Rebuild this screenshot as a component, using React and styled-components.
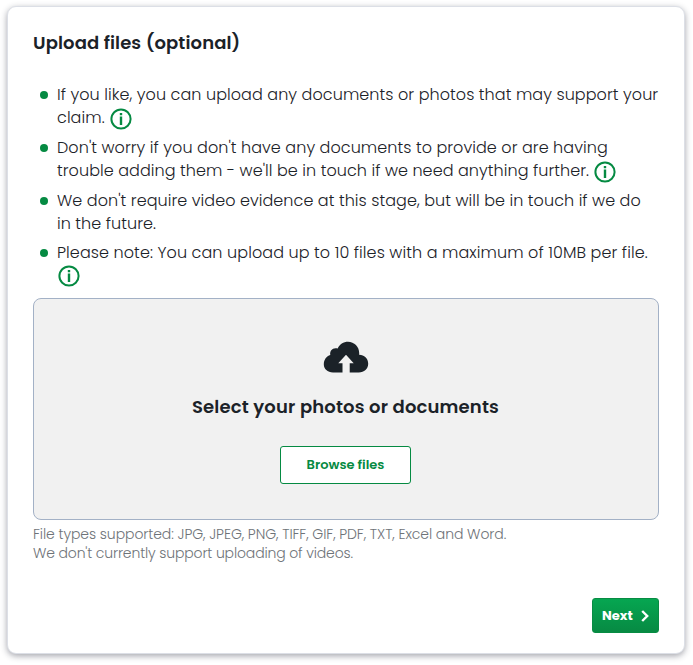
import React from "react";
import styled, { createGlobalStyle } from "styled-components";

const GlobalStyle = createGlobalStyle`
  * { box-sizing: border-box; }
  body {
    margin: 0;
    background: #fff;
    color: #1b2228;
    font-family: Poppins, Inter, sans-serif;
  }
`;

const Page = styled.main`
  height: 665px;
  padding: 6px 8px 11px 7px;
`;

const Card = styled.section`
  display: flex;
  flex-direction: column;
  height: 648px;
  padding: 24px 26px 20px;
  border: 1px solid #dcdfe6;
  border-radius: 9px;
  background: #fff;
  box-shadow: 0 2px 6px rgba(40, 42, 60, 0.42);
`;

const Line = styled.span`
  display: flex;
  align-items: center;
  height: ${(p) => p.$height || 23}px;
  white-space: nowrap;
  letter-spacing: ${(p) => p.$spacing || 0}px;
`;

const Title = styled.h1`
  margin: 0 0 29px -1px;
  font-size: 18px;
  font-weight: 600;
`;

const List = styled.ul`
  display: flex;
  flex-direction: column;
  gap: 6.6px;
  height: 215px;
  margin: 0;
  padding: 0 0 0 6px;
  list-style: none;
  font-size: 16px;
  font-weight: 300;
`;

const Item = styled.li`
  display: flex;
  gap: 9px;

  &:nth-child(3) {
    margin-top: 1px;
  }

  &:last-child {
    margin-top: -1px;
  }
`;

const Bullet = styled.span`
  flex: none;
  width: 8px;
  height: 8px;
  margin-top: 8px;
  border-radius: 50%;
  background: #058a42;
`;

const InfoSvg = styled.svg`
  flex: none;
  width: 22px;
  height: 22px;
  margin: ${(p) => p.$drop}px 0 0 ${(p) => p.$gap}px;
`;

const DropZone = styled.div`
  display: flex;
  flex-direction: column;
  align-items: center;
  height: 222px;
  margin: 0 -1px 0 -1px;
  padding-top: 42px;
  border: 1px solid #a3b1c6;
  border-radius: 8px;
  background: #f1f1f1;
`;

const CloudSvg = styled.svg`
  width: 46px;
  height: 33px;
`;

const ZoneTitle = styled.h2`
  margin: 21px 1px 28px 0;
  font-size: 18px;
  font-weight: 600;
`;

const BrowseButton = styled.button`
  display: flex;
  align-items: center;
  justify-content: center;
  width: 131px;
  height: 38px;
  margin-right: 1px;
  padding: 0 0 1px;
  border: 1px solid #058a42;
  border-radius: 3px;
  background: #fff;
  color: #058a42;
  font: 600 13px Poppins, Inter, sans-serif;
`;

const Hint = styled.p`
  margin: 5px 0 0 -1px;
  color: #6e7378;
  font-size: 14px;
  font-weight: 300;
`;

const NextButton = styled.button`
  display: flex;
  align-items: center;
  align-self: flex-end;
  justify-content: space-between;
  width: 67px;
  height: 35px;
  margin: auto -1px 0 0;
  padding: 0 9px;
  border: 1px solid #078c43;
  border-radius: 3px;
  background: linear-gradient(#06a651, #078a43);
  color: #fff;
  font: 700 13px Poppins, Inter, sans-serif;
`;

const ChevronSvg = styled.svg`
  width: 8px;
  height: 12px;
`;

function InfoIcon({ gap = 0, drop = 3 }) {
  return (
    <InfoSvg $gap={gap} $drop={drop} viewBox="0 0 22 22" fill="none">
      <circle cx="11" cy="11" r="9.6" stroke="#058a42" strokeWidth="2" />
      <path d="M9.800 5h2.400v2.200H9.800zM9.800 8.600h2.400V17H9.800z" fill="#058a42" />
    </InfoSvg>
  );
}

const notes = [
  [
    { text: "If you like, you can upload any documents or photos that may support your", spacing: 0.07 },
    { text: "claim.", spacing: 0.07, info: { gap: 5 } },
  ],
  [
    { text: "Don't worry if you don't have any documents to provide or are having", spacing: 0.06 },
    { text: "trouble adding them - we'll be in touch if we need anything further.", spacing: 0.06, info: { gap: 5 } },
  ],
  [
    { text: "We don't require video evidence at this stage, but will be in touch if we do", spacing: 0.06 },
    { text: "in the future.", spacing: 0.06 },
  ],
  [
    { text: "Please note: You can upload up to 10 files with a maximum of 10MB per file.", spacing: 0.085 },
    { text: "", info: { gap: 1, drop: 1 } },
  ],
];

export default function App() {
  return (
    <Page>
      <GlobalStyle />
      <Card>
        <Title><Line $spacing={0.1}>Upload files (optional)</Line></Title>
        <List>
          {notes.map((lines, i) => (
            <Item key={i}>
              <Bullet />
              <div>
                {lines.map((line, j) => (
                  <Line key={j} $spacing={line.spacing}>
                    {line.text}
                    {line.info && <InfoIcon {...line.info} />}
                  </Line>
                ))}
              </div>
            </Item>
          ))}
        </List>
        <DropZone>
          <CloudSvg viewBox="0 0 46 33">
            <path
              fill="#1b2228"
              d="M10 31.500C4.500 31.500.800 28 .800 23.300c0-4.500 2.700-8 6.500-9.200C6.500 10.300 9 7.300 12.500 7.300c1 0 1.500.100 2.200.300C16.500 3.300 20.500.800 25 .800c6.300 0 11.200 5 11.200 11.200 0 .800 0 1.200-.100 1.800C41 13.700 45.200 17.400 45.200 22.800c0 5.200-4 8.700-9.500 8.700H26.700V22.200h4L23 13.700l-7.700 8.500h4.200v9.300z"
            />
          </CloudSvg>
          <ZoneTitle><Line $spacing={0.15}>Select your photos or documents</Line></ZoneTitle>
          <BrowseButton><Line>Browse files</Line></BrowseButton>
        </DropZone>
        <Hint>
          <Line $height={19} $spacing={-0.075}>File types supported: JPG, JPEG, PNG, TIFF, GIF, PDF, TXT, Excel and Word.</Line>
          <Line $height={19} $spacing={-0.14}>We don't currently support uploading of videos.</Line>
        </Hint>
        <NextButton>
          <Line>Next</Line>
          <ChevronSvg viewBox="0 0 8 12" fill="none">
            <path d="M1.200 1 6.200 6l-5 5" stroke="#fff" strokeWidth="2.400" />
          </ChevronSvg>
        </NextButton>
      </Card>
    </Page>
  );
}
